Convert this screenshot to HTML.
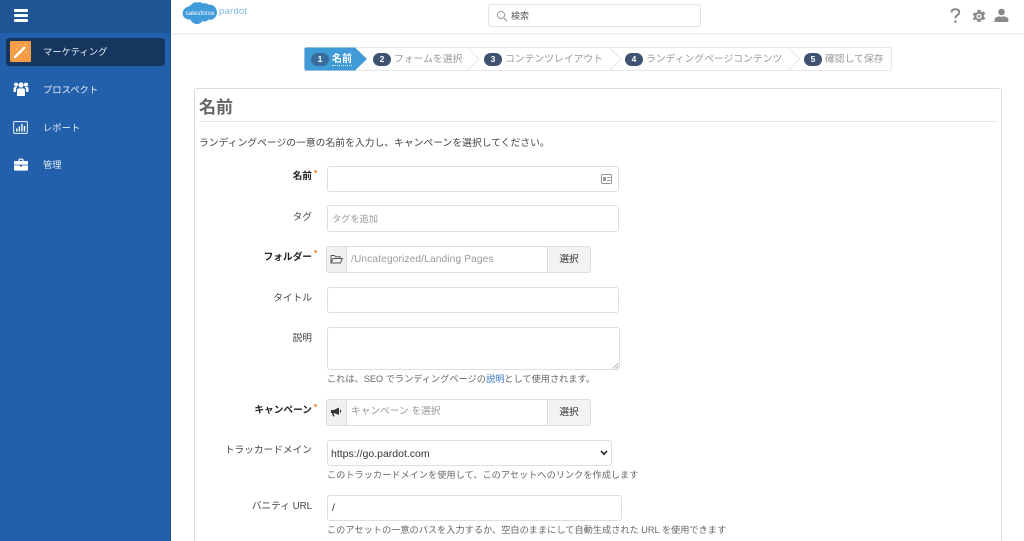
<!DOCTYPE html>
<html lang="ja"><head><meta charset="utf-8"><title>名前</title>
<style>
*{box-sizing:border-box}
html,body{margin:0;padding:0;width:1024px;height:541px;overflow:hidden;background:#fff;font-family:"Liberation Sans","Noto Sans CJK JP",sans-serif;color:#444}
#p{position:absolute;left:0;top:0;width:1024px;height:541px;overflow:hidden}
.a{position:absolute}
.t{position:absolute;white-space:nowrap;line-height:14px}
.lab{position:absolute;right:712px;white-space:nowrap;line-height:14px;font-size:9.7px;color:#444;text-align:right}
.lab.b{font-weight:700;color:#222}
.star{position:absolute;left:314px;width:3px;height:3px;border-radius:50%;background:#f2994a}
.inp{position:absolute;background:#fff;border:1px solid #dedede;border-radius:3px}
.help{position:absolute;left:327px;white-space:nowrap;line-height:14px;font-size:9.2px;color:#666}
.ph{color:#999}
.step{position:absolute;top:48px;height:24px;line-height:23px;font-size:9.8px;color:#999;white-space:nowrap}
.num{position:absolute;top:53px;width:18px;height:13px;border-radius:7px;background:#3f5370;color:#fff;font-size:8.5px;font-weight:700;text-align:center;line-height:13px}
.nav{position:absolute;left:43px;color:#e6eef8;font-size:9.3px;line-height:14px;white-space:nowrap}
.addon{position:absolute;background:#f0f0f0;border:1px solid #dedede;border-radius:3px 0 0 3px}
.btn{position:absolute;background:#f3f3f3;border:1px solid #dedede;border-radius:0 3px 3px 0;font-size:9.7px;line-height:25px;text-align:center;color:#333}
</style></head><body>
<div id="p">

<!-- sidebar -->
<div class="a" style="left:0;top:0;width:171px;height:541px;background:#2360ab;border-right:1px solid #1d4f8f"></div>
<div class="a" style="left:0;top:0;width:170px;height:33px;background:#1f5595"></div>
<div class="a" style="left:14px;top:9px;width:14px;height:3px;background:#fff;border-radius:1px"></div>
<div class="a" style="left:14px;top:14px;width:14px;height:3px;background:#fff;border-radius:1px"></div>
<div class="a" style="left:14px;top:19px;width:14px;height:3px;background:#fff;border-radius:1px"></div>
<div class="a" style="left:6px;top:38px;width:159px;height:28px;background:#14365f;border-radius:3px"></div>
<div class="a" style="left:10px;top:41px;width:21px;height:21px;background:#f49d46;border-radius:1px"></div>
<svg class="a" style="left:10px;top:41px" width="21" height="21" viewBox="0 0 21 21"><path d="M5 16 L13 8" stroke="#fff" stroke-width="2.4" stroke-linecap="round"/><path d="M13 8L15 6" stroke="#fff" stroke-width="2.4"/><path d="M8 5h1M16 11h1M15 3h1M6 8h1" stroke="#fff" stroke-width="1"/></svg>
<div class="nav" style="top:45px">マーケティング</div>
<svg class="a" style="left:13px;top:81px" width="16" height="16" viewBox="0 0 16 16" fill="#fff"><circle cx="8" cy="4" r="2.6"/><circle cx="3" cy="3.6" r="2"/><circle cx="13" cy="3.6" r="2"/><path d="M4 15V9.5Q4 7.4 6 7.4H10Q12 7.4 12 9.5V15Z"/><path d="M0.5 11V7.6Q0.5 6 2 6H4.2Q3 7 3 9V11ZM15.5 11V7.6Q15.5 6 14 6H11.8Q13 7 13 9V11Z"/></svg>
<div class="nav" style="top:83px">プロスペクト</div>
<svg class="a" style="left:13px;top:121px" width="15" height="13" viewBox="0 0 15 13"><rect x=".6" y=".6" width="13.8" height="11.8" rx="1" fill="none" stroke="#d5e2f3" stroke-width="1.1"/><path d="M3 7.5h1.4v3H3zM5.6 5.5H7v5H5.6zM8.2 3H9.6v7.5H8.2zM10.8 5h1.4v5.5h-1.4z" fill="#fff"/></svg>
<div class="nav" style="top:121px">レポート</div>
<svg class="a" style="left:14px;top:158px" width="14" height="13" viewBox="0 0 14 13" fill="#fff"><path d="M4.5 3V1.4Q4.5.6 5.3.6H8.7Q9.5.6 9.5 1.4V3H8.4V1.7H5.6V3Z"/><path d="M0 4Q0 3 1 3H13Q14 3 14 4V6.6H0Z"/><path d="M0 7.4H6V8.6H8V7.4H14V11.6Q14 12.6 13 12.6H1Q0 12.6 0 11.6Z"/></svg>
<div class="nav" style="top:158px">管理</div>

<!-- header -->
<div class="a" style="left:171px;top:33px;width:853px;height:2px;background:#f2f2f2"></div>
<svg class="a" style="left:182px;top:1px" width="36" height="25" viewBox="0 0 36 25"><path d="M9 4Q12 0.5 16 1.5Q18.5 0.5 21 2.5Q24 1.5 26.5 3.5Q33 3.5 34.5 9Q36 13 33 16.5Q30.5 19.5 26.5 18.5Q24 21.5 20.5 20Q17 24.5 12.5 22.5Q9.5 21.5 8.5 18.5Q4 19 1.5 15.5Q-0.5 11.5 2 8.5Q3.5 6 6 6Q7.5 4.5 9 4Z" fill="#3f9bd9"/><text x="18" y="14" font-size="6.4" fill="#fff" text-anchor="middle" font-family="Liberation Sans">salesforce</text></svg>
<div class="t" style="left:219px;top:5px;font-size:9.5px;color:#7db8e4;letter-spacing:.2px">pardot</div>
<div class="inp" style="left:488px;top:4px;width:213px;height:23px;border-color:#e2e2e2"></div>
<svg class="a" style="left:496px;top:10px" width="12" height="12" viewBox="0 0 12 12"><circle cx="5" cy="5" r="3.6" fill="none" stroke="#999" stroke-width="1"/><path d="M7.8 7.8L11 11" stroke="#999" stroke-width="1.2"/></svg>
<div class="t" style="left:511px;top:9px;font-size:9px;color:#555">検索</div>
<svg class="a" style="left:950px;top:8px" width="11" height="16" viewBox="0 0 11 16"><path d="M1.4 4.4Q1.6 1.2 5.3 1.2Q9.2 1.2 9.2 4.2Q9.2 6 7.2 7.2Q5.5 8.2 5.5 10.4" fill="none" stroke="#8a8a8a" stroke-width="2"/><rect x="4.4" y="12.4" width="2.2" height="2.4" fill="#8a8a8a"/></svg>
<svg class="a" style="left:972px;top:9px" width="14" height="14" viewBox="0 0 14 14"><path d="M5.6.8h2.8l.4 1.8 1.5.7 1.7-.8 1.3 2.3-1.4 1.2v1.7l1.4 1.2-1.3 2.3-1.7-.8-1.5.8-.4 1.8H5.6l-.4-1.8-1.5-.8-1.7.8L.7 9.7l1.4-1.2V6.8L.7 5.6 2 3.3l1.7.8 1.5-.7z" fill="#8a8a8a"/><circle cx="7" cy="7.3" r="2.6" fill="#fff"/><circle cx="7" cy="7.3" r="1.3" fill="#8a8a8a"/></svg>
<svg class="a" style="left:994px;top:8px" width="15" height="15" viewBox="0 0 15 15" fill="#8a8a8a"><circle cx="7.5" cy="4" r="3.3"/><path d="M.6 14V11.6Q.6 9.6 3 9L5.5 8.2Q7.5 9.2 9.5 8.2L12 9Q14.4 9.6 14.4 11.6V14Z"/></svg>

<!-- steps -->
<div class="a" style="left:304px;top:47px;width:588px;height:24px;border:1px solid #e6e6e6;border-radius:3px;background:#fff"></div>
<svg class="a" style="left:304px;top:47px" width="588" height="24" viewBox="0 0 588 24"><path d="M2 .5H51L63 12 51 23.5H2Q.5 23.5.5 22V2Q.5.5 2 .5Z" fill="#3f9ad6"/><path d="M164 1L175 12 164 23M306 1L317 12 306 23M484.500 1L495.500 12 484.500 23" fill="none" stroke="#e6e6e6"/></svg>
<div class="num" style="left:311px;background:#3a6d9c">1</div>
<div class="step" style="left:332px;color:#fff;font-weight:700;font-size:10px">名前</div>
<div class="a" style="left:332px;top:65px;width:20px;border-top:1px dotted #d7ebf8"></div>
<div class="num" style="left:373px">2</div>
<div class="step" style="left:394px">フォームを選択</div>
<div class="num" style="left:484px">3</div>
<div class="step" style="left:505px">コンテンツレイアウト</div>
<div class="num" style="left:625px">4</div>
<div class="step" style="left:646px">ランディングページコンテンツ</div>
<div class="num" style="left:804px">5</div>
<div class="step" style="left:825px">確認して保存</div>

<!-- panel -->
<div class="a" style="left:194px;top:88px;width:808px;height:453px;border:1px solid #ddd;border-bottom:0;border-radius:3px 3px 0 0;background:#fff"></div>
<div class="t" style="left:199px;top:97px;font-size:17px;line-height:22px;font-weight:700;color:#666">名前</div>
<div class="a" style="left:199px;top:121px;width:798px;height:1px;background:#e5e5e5"></div>
<div class="t" style="left:199px;top:137px;font-size:9.8px;color:#444">ランディングページの一意の名前を入力し、キャンペーンを選択してください。</div>

<div class="lab b" style="top:170px">名前</div><div class="star" style="top:170px"></div>
<div class="inp" style="left:327px;top:166px;width:292px;height:26px"></div>
<svg class="a" style="left:601px;top:174px" width="11" height="10" viewBox="0 0 11 10"><rect x=".5" y=".5" width="10" height="9" rx="1" fill="none" stroke="#999"/><rect x="2" y="3" width="3" height="4" fill="#999"/><path d="M6 3.5h3.400M6 6.500h3.400" stroke="#999"/></svg>

<div class="lab" style="top:211px">タグ</div>
<div class="inp" style="left:327px;top:205px;width:292px;height:27px"></div>
<div class="t ph" style="left:332px;top:212px;font-size:9.2px">タグを追加</div>

<div class="lab b" style="top:251px">フォルダー</div><div class="star" style="top:250px"></div>
<div class="addon" style="left:326px;top:246px;width:21px;height:27px"></div>
<svg class="a" style="left:330px;top:254px" width="13" height="10" viewBox="0 0 13 10"><path d="M1 9V1.500h3.500l1 1.300H10V4.500M1 9h9.400L12.400 4.500H3L1 9Z" fill="none" stroke="#555" stroke-width="1"/></svg>
<div class="inp" style="left:346px;top:246px;width:202px;height:27px;border-radius:0"></div>
<div class="t ph" style="left:351px;top:253px;font-size:10.2px;letter-spacing:.12px">/Uncategorized/Landing Pages</div>
<div class="btn" style="left:547px;top:246px;width:44px;height:27px">選択</div>

<div class="lab" style="top:292px">タイトル</div>
<div class="inp" style="left:327px;top:287px;width:292px;height:26px"></div>

<div class="lab" style="top:332px">説明</div>
<div class="inp" style="left:327px;top:327px;width:293px;height:43px"></div>
<svg class="a" style="left:612px;top:362px" width="7" height="7" viewBox="0 0 7 7"><path d="M1 6.500L6.500 1M4 6.500L6.500 4" stroke="#999" stroke-width=".8"/></svg>
<div class="help" style="top:372px">これは、SEO でランディングページの<span style="color:#3b78c2">説明</span>として使用されます。</div>

<div class="lab b" style="top:404px">キャンペーン</div><div class="star" style="top:404px"></div>
<div class="addon" style="left:326px;top:399px;width:21px;height:27px"></div>
<svg class="a" style="left:331px;top:407px" width="11" height="10" viewBox="0 0 11 10" fill="#333"><path d="M0 3H3L8 .5V8L3 6H2.600L3.600 9.400H2L1 6H0Z"/><path d="M9 3Q10.600 4.200 9 5.600" fill="none" stroke="#333"/></svg>
<div class="inp" style="left:346px;top:399px;width:202px;height:27px;border-radius:0"></div>
<div class="t ph" style="left:351px;top:405px;font-size:9.7px">キャンペーン を選択</div>
<div class="btn" style="left:547px;top:399px;width:44px;height:27px">選択</div>

<div class="lab" style="top:444px">トラッカードメイン</div>
<div class="inp" style="left:327px;top:440px;width:285px;height:26px"></div>
<div class="t" style="left:331px;top:447px;font-size:10.5px;color:#333">https://go.pardot.com</div>
<svg class="a" style="left:600px;top:450px" width="8" height="6" viewBox="0 0 8 6"><path d="M1 1L4 4.200 7 1" fill="none" stroke="#222" stroke-width="1.600"/></svg>
<div class="help" style="top:468px">このトラッカードメインを使用して、このアセットへのリンクを作成します</div>

<div class="lab" style="top:500px">バニティ URL</div>
<div class="inp" style="left:327px;top:495px;width:295px;height:26px"></div>
<div class="t" style="left:332px;top:502px;font-size:10.4px;color:#333">/</div>
<div class="help" style="top:523px">このアセットの一意のパスを入力するか、空白のままにして自動生成された URL を使用できます</div>

</div>
</body></html>
